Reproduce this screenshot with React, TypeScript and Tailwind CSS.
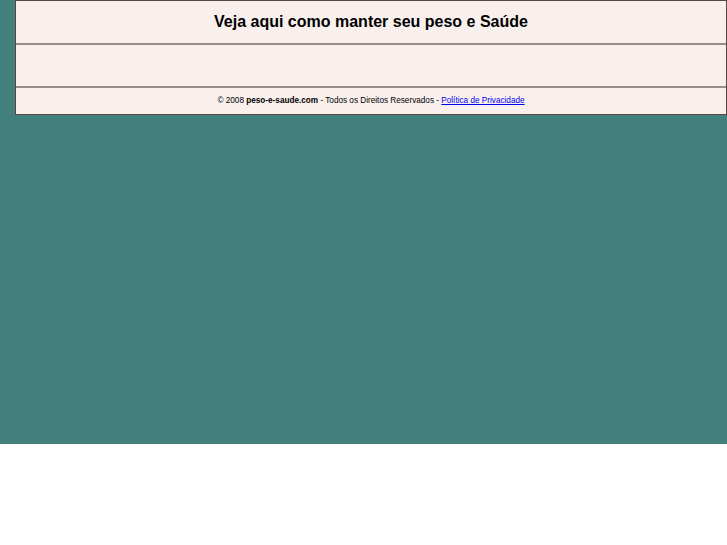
import React from 'react';

export default function App() {
  return (
    <div className="w-[727px] h-[545px] bg-white" style={{ fontFamily: '"Liberation Sans", Arial, sans-serif' }}>
      <div className="h-[444px] bg-[#437f7c] pl-[15px]">
        {/* caixa principal */}
        <div className="border border-[#5a4646] bg-[#f9f0ee] flex flex-col">
          <div className="h-[44px] flex items-center justify-center border-b-2 border-[#9c8c8c]">
            <h1 className="text-[16px] font-bold text-black">Veja aqui como manter seu peso e Saúde</h1>
          </div>
          <div className="h-[43px] border-b-2 border-[#9c8c8c]"></div>
          <div className="h-[26px] pt-[1px] flex items-center justify-center text-[8.2px] text-black">
            <span>
              © 2008 <b>peso-e-saude.com</b> - Todos os Direitos Reservados -{' '}
              <a href="#" className="text-[#0000ee] underline">Política de Privacidade</a>
            </span>
          </div>
        </div>
      </div>
    </div>
  );
}
